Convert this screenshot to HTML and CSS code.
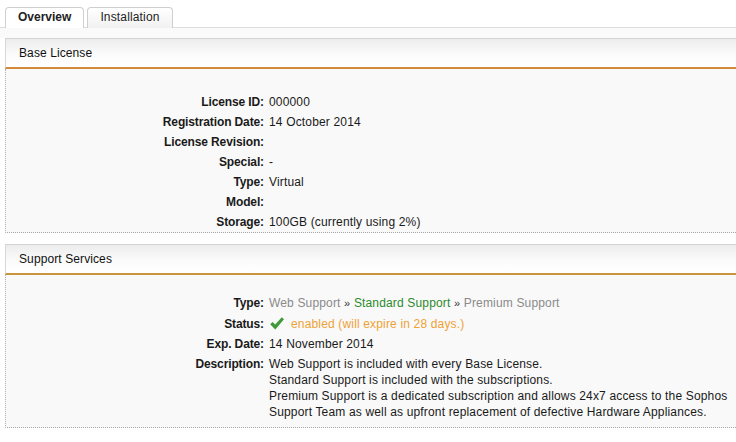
FILE: index.html
```html
<!DOCTYPE html>
<html>
<head>
<meta charset="utf-8">
<link rel="stylesheet" href="styles.css">
</head>
<body>
<div class="tabs">
  <div class="tab active">Overview</div>
  <div class="tab">Installation</div>
</div>
<div class="content">
  <section class="panel panel-base">
    <div class="panel-head">Base License</div>
    <div class="panel-body">
      <div class="rows">
        <div class="label">License ID:</div><div class="value">000000</div>
        <div class="label">Registration Date:</div><div class="value">14 October 2014</div>
        <div class="label">License Revision:</div><div class="value"></div>
        <div class="label">Special:</div><div class="value">-</div>
        <div class="label">Type:</div><div class="value">Virtual</div>
        <div class="label">Model:</div><div class="value"></div>
        <div class="label">Storage:</div><div class="value">100GB (currently using 2%)</div>
      </div>
    </div>
  </section>
  <section class="panel panel-support">
    <div class="panel-head">Support Services</div>
    <div class="panel-body">
      <div class="rows">
        <div class="label">Type:</div>
        <div class="value"><span class="muted">Web Support</span> <span class="sep">»</span> <span class="green">Standard Support</span> <span class="sep">»</span> <span class="muted">Premium Support</span></div>
        <div class="label status-label">Status:</div>
        <div class="value status"><svg class="check" width="16" height="15" viewBox="0 0 16 15"><path d="M1.2 8.2 L3.6 5.9 L6.2 8.6 L12.8 1.2 L15 3.3 L6.3 13.4 Z" fill="#3f9a3a"/></svg><span class="orange">enabled (will expire in 28 days.)</span></div>
        <div class="label">Exp. Date:</div><div class="value">14 November 2014</div>
        <div class="label">Description:</div>
        <div class="value desc">Web Support is included with every Base License.<br>Standard Support is included with the subscriptions.<br>Premium Support is a dedicated subscription and allows 24x7 access to the Sophos<br>Support Team as well as upfront replacement of defective Hardware Appliances.</div>
      </div>
    </div>
  </section>
</div>
</body>
</html>
```

FILE: styles.css
```css
html, body {
  margin: 0;
  padding: 0;
  background: #ffffff;
  font-family: "Liberation Sans", Arial, sans-serif;
  font-size: 12px;
  color: #1a1a1a;
  overflow: hidden;
}

.tabs {
  display: flex;
  gap: 3px;
  padding: 7px 0 0 5px;
  border-bottom: 1px solid #dcdcdc;
  height: 20px;
}

.tab {
  box-sizing: border-box;
  height: 21px;
  padding: 0 12px;
  line-height: 19px;
  border: 1px solid #cfcfcf;
  border-bottom: none;
  border-radius: 4px 4px 0 0;
  background: linear-gradient(#ffffff, #f1f1f1);
  color: #222;
  letter-spacing: 0.15px;
}

.tab.active {
  font-weight: bold;
  background: #ffffff;
  letter-spacing: 0;
}

.content {
  background: linear-gradient(#fafafa, #fafafa 10px, #ffffff 10px);
  padding-top: 10px;
}

.panel {
  margin-left: 5px;
  margin-bottom: 11px;
}

.panel-head {
  height: 28px;
  line-height: 28px;
  padding-left: 13px;
  border-top: 1px solid #d4d4d4;
  border-left: 1px solid #d8d8d8;
  border-bottom: 2px solid #d38a3b;
  background: linear-gradient(#ececec, #fbfbfb 55%, #ffffff);
  color: #111;
  letter-spacing: 0.1px;
}

.panel-support .panel-head {
  border-bottom-color: #c9963f;
}

.panel-body {
  background: #f9f9f9;
  border-left: 1px dotted #b0b0b0;
  border-bottom: 1px dotted #a8a8a8;
}

.panel-base .panel-body {
  padding: 23px 0 0;
}

.panel-support .panel-body {
  padding: 18px 0 5px;
}

.rows {
  display: grid;
  grid-template-columns: 258px 1fr;
  column-gap: 5px;
}

.label {
  text-align: right;
  font-weight: bold;
  line-height: 16px;
  padding: 2px 0;
  color: #1a1a1a;
  letter-spacing: -0.12px;
}

.value {
  line-height: 16px;
  padding: 2px 0;
  min-height: 16px;
  color: #1a1a1a;
  letter-spacing: 0.16px;
}

.status-label {
  padding-top: 3px;
  padding-bottom: 2px;
}

.status {
  display: flex;
  align-items: center;
  gap: 6px;
  padding-top: 3px;
  padding-bottom: 2px;
}

.check {
  display: block;
  margin-top: -1px;
}

.muted {
  color: #8a8a8a;
}

.green {
  color: #2c8a2c;
}

.sep {
  color: #333;
  font-size: 11px;
}

.orange {
  color: #eea236;
}
```
